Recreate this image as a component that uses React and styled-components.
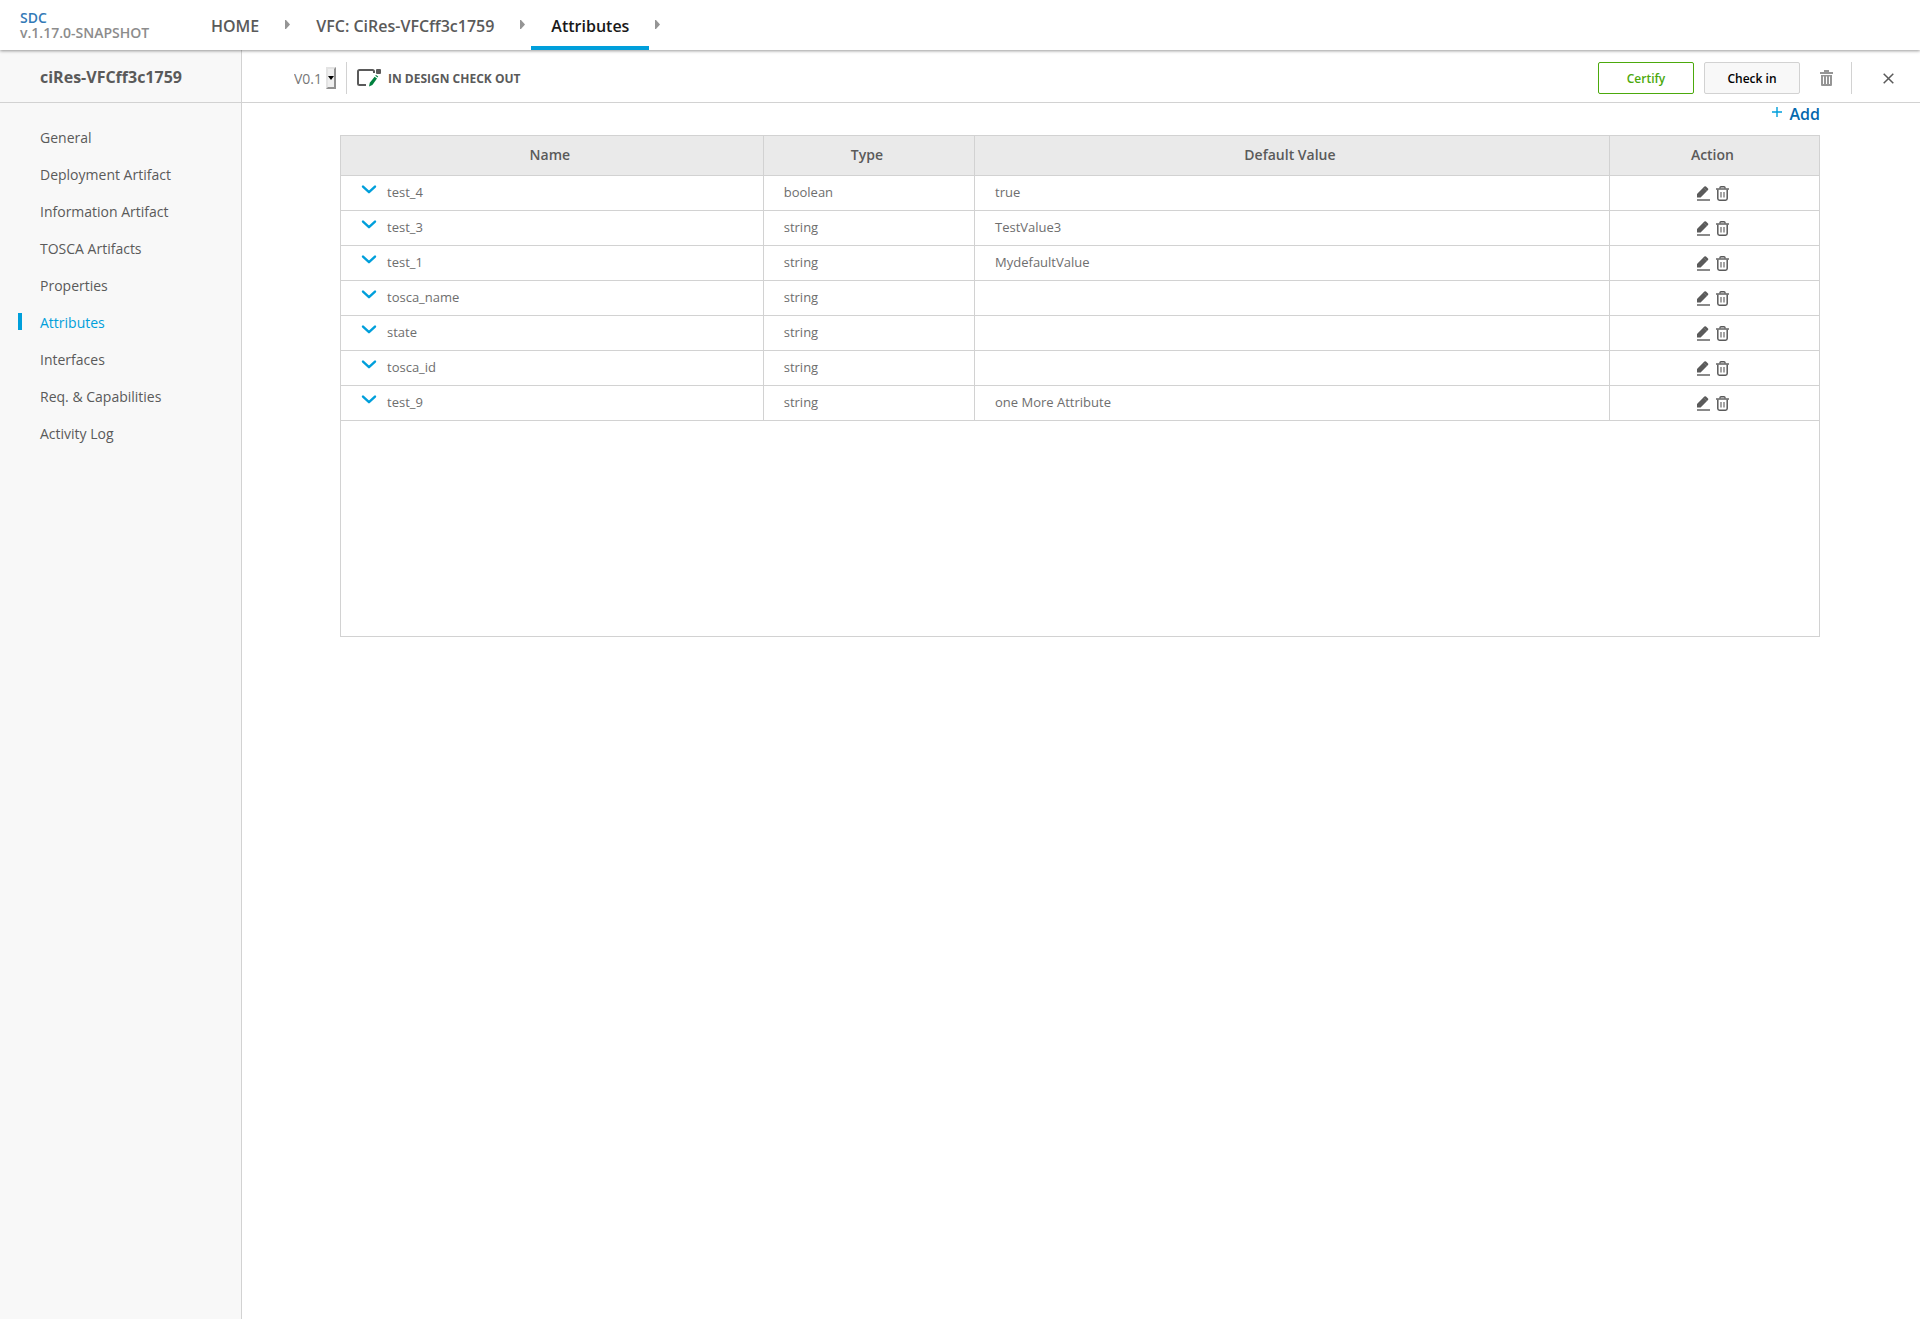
import React, { useState } from "react";
import styled, { createGlobalStyle } from "styled-components";

const GlobalStyle = createGlobalStyle`
  * {
    box-sizing: border-box;
  }

  body {
    margin: 0;
    background-color: #fff;
    color: #5a5a5a;
    font-family: "Open Sans", "Noto Sans", sans-serif;
    font-size: 14px;
  }

  button,
  select {
    font-family: inherit;
  }

  svg {
    display: block;
  }
`;

const Page = styled.div`
  display: flex;
  flex-direction: column;
  min-height: 100vh;
`;

const TopNav = styled.header`
  display: flex;
  height: 50px;
  position: relative;
  z-index: 1;
  background-color: #fff;
  box-shadow: 0 1px 3px rgba(0, 0, 0, 0.4);
`;

const Logo = styled.div`
  width: 191px;
  padding: 10px 0 0 20px;
  font-weight: 600;
  line-height: 15px;
`;

const LogoLink = styled.a`
  display: block;
  color: #337ab7;
  text-decoration: none;
`;

const Version = styled.div`
  color: #8c8c8c;
`;

const Breadcrumbs = styled.nav`
  display: flex;
  align-items: center;
  gap: 6px;
`;

const Crumb = styled.a`
  height: 50px;
  padding: 0 20px;
  border-bottom: 4px solid ${(props) => (props.$active ? "#009fdb" : "transparent")};
  color: ${(props) => (props.$active ? "#191919" : "#5a5a5a")};
  font-size: 16px;
  font-weight: 600;
  line-height: 52px;
  text-decoration: none;
`;

const CrumbArrow = styled.svg`
  width: 5px;
  height: 9px;
  margin-bottom: 2px;
  fill: #959595;
`;

const Body = styled.div`
  display: flex;
  flex: 1;
`;

const Sidebar = styled.aside`
  width: 242px;
  flex-shrink: 0;
  border-right: 1px solid #d2d2d2;
  background-color: #f8f8f8;
`;

const SidebarTitle = styled.h1`
  height: 53px;
  margin: 0;
  padding-left: 40px;
  border-bottom: 1px solid #d2d2d2;
  font-size: 16px;
  font-weight: 700;
  line-height: 54px;
`;

const Menu = styled.ul`
  margin: 0;
  padding: 16px 0 0;
  list-style: none;
`;

const MenuItem = styled.li`
  display: flex;
  align-items: center;
  gap: 18px;
  height: 37px;
  padding-left: 18px;
`;

const MenuMark = styled.span`
  width: 4px;
  height: 17px;
  margin-bottom: 2px;
  background-color: ${(props) => (props.$active ? "#009fdb" : "transparent")};
`;

const MenuLink = styled.a`
  color: ${(props) => (props.$active ? "#009fdb" : "#5a5a5a")};
  text-decoration: none;
`;

const Main = styled.main`
  flex: 1;
  min-width: 0;
`;

const Toolbar = styled.div`
  display: flex;
  align-items: center;
  height: 53px;
  padding: 4px 26px 0 52px;
  border-bottom: 1px solid #d2d2d2;
`;

const VersionPicker = styled.div`
  position: relative;
  width: 42px;
  margin-right: 10px;
`;

const VersionSelect = styled.select`
  width: 100%;
  height: 22px;
  padding: 0;
  border: none;
  appearance: none;
  background: none;
  color: #777;
  font-size: 14px;
`;

const SelectArrow = styled.span`
  display: flex;
  align-items: center;
  justify-content: center;
  position: absolute;
  top: 0;
  right: 0;
  width: 10px;
  height: 22px;
  border: 2px solid;
  border-color: #e3e3e3 #909090 #909090 #e3e3e3;
  background-color: #efefef;
  pointer-events: none;
`;

const Divider = styled.span`
  width: 1px;
  height: 32px;
  background-color: #d2d2d2;
`;

const Status = styled.div`
  display: flex;
  align-items: center;
  gap: 6px;
  margin-left: 10px;
  font-size: 12px;
  font-weight: 700;
`;

const Actions = styled.div`
  display: flex;
  align-items: center;
  margin-left: auto;
`;

const Button = styled.button`
  width: 96px;
  height: 32px;
  margin-right: 10px;
  padding: 0;
  border: 1px solid ${(props) => (props.$green ? "#4ca90c" : "#d2d2d2")};
  border-radius: 2px;
  background-color: ${(props) => (props.$green ? "#fff" : "#f8f8f8")};
  color: ${(props) => (props.$green ? "#4ca90c" : "#000")};
  font-size: 12px;
  font-weight: 600;
  cursor: pointer;
`;

const IconButton = styled.button`
  padding: 0;
  border: none;
  background: none;
  cursor: pointer;
`;

const DeleteButton = styled(IconButton)`
  margin: 0 18px 0 10px;
`;

const CloseButton = styled(IconButton)`
  margin-left: 31px;
`;

const Content = styled.section`
  padding: 0 100px 0 98px;
`;

const AddRow = styled.div`
  display: flex;
  justify-content: flex-end;
  height: 32px;
`;

const AddButton = styled.button`
  display: flex;
  align-items: flex-start;
  gap: 8px;
  height: 22px;
  padding: 0;
  border: none;
  background: none;
  color: #0568ae;
  font-size: 16px;
  font-weight: 600;
  line-height: 22px;
  cursor: pointer;

  svg {
    margin-top: 4px;
  }
`;

const TableBox = styled.div`
  min-height: 502px;
  border: 1px solid #d2d2d2;
`;

const Table = styled.table`
  width: 100%;
  border-collapse: separate;
  border-spacing: 0;
  table-layout: fixed;
`;

const HeadCell = styled.th`
  width: ${(props) => props.$width};
  height: 40px;
  padding: 0 4px 2px 0;
  border-right: 1px solid #d2d2d2;
  border-bottom: 1px solid #d2d2d2;
  background-color: #eaeaea;
  font-size: 14px;
  font-weight: 600;

  &:last-child {
    border-right: none;
  }
`;

const Cell = styled.td`
  height: 35px;
  padding: 0 20px 2px;
  border-right: 1px solid #d2d2d2;
  border-bottom: 1px solid #d2d2d2;
  color: #6e6e6e;
  font-size: 13px;
  line-height: 18px;

  &:last-child {
    border-right: none;
  }
`;

const NameCell = styled.div`
  display: flex;
  align-items: flex-start;
  gap: 10px;
`;

const RowActions = styled.div`
  display: flex;
  justify-content: center;
  gap: 6px;
  padding: 2px 3px 0 0;
`;

const menu = [
  "General",
  "Deployment Artifact",
  "Information Artifact",
  "TOSCA Artifacts",
  "Properties",
  "Attributes",
  "Interfaces",
  "Req. & Capabilities",
  "Activity Log",
];

const crumbs = ["HOME", "VFC: CiRes-VFCff3c1759", "Attributes"];

const columns = [
  { title: "Name", width: "28.6%" },
  { title: "Type", width: "14.3%" },
  { title: "Default Value", width: "42.95%" },
  { title: "Action", width: "14.15%" },
];

const attributes = [
  { name: "test_4", type: "boolean", value: "true" },
  { name: "test_3", type: "string", value: "TestValue3" },
  { name: "test_1", type: "string", value: "MydefaultValue" },
  { name: "tosca_name", type: "string", value: "" },
  { name: "state", type: "string", value: "" },
  { name: "tosca_id", type: "string", value: "" },
  { name: "test_9", type: "string", value: "one More Attribute" },
];

const CheckOutIcon = () => (
  <svg width="25" height="18" viewBox="0 0 25 18" fill="none">
    <path
      d="M17 4V2.5Q17 1 15.5 1H2.5Q1 1 1 2.5V14.5Q1 16 2.5 16H9"
      stroke="#5a5a5a"
      strokeWidth="2"
    />
    <rect x="19" y="0" width="5" height="5" rx="1" fill="#5a5a5a" />
    <path d="M12 17.5L12.8 13.8L17.6 7.7L20 9.4L15.4 16Z" fill="#00803e" />
    <path d="M18.2 6.8L19 6L21.2 7.6L20.6 8.6Z" fill="#00803e" />
  </svg>
);

const SolidTrashIcon = () => (
  <svg width="13" height="16" viewBox="0 0 13 16" fill="#959595">
    <path d="M4 0H9V2H13V4H0V2H4Z" />
    <path
      fillRule="evenodd"
      d="M1 5H12V15Q12 16 11 16H2Q1 16 1 15ZM3 6.5V14H4V6.5ZM6 6.5V14H7V6.5ZM9 6.5V14H10V6.5Z"
    />
  </svg>
);

const CloseIcon = () => (
  <svg width="11" height="11" viewBox="0 0 11 11" stroke="#5a5a5a" strokeWidth="1.5">
    <path d="M0.7 0.7L10.3 10.3M10.3 0.7L0.7 10.3" />
  </svg>
);

const PlusIcon = () => (
  <svg width="10" height="10" viewBox="0 0 10 10" stroke="#009fdb" strokeWidth="1.4">
    <path d="M5 0V10M0 5H10" />
  </svg>
);

const ChevronIcon = () => (
  <svg width="16" height="12" viewBox="0 0 16 12" fill="none">
    <path
      d="M2 3.6L8 9.2L14 3.6"
      stroke="#009fdb"
      strokeWidth="2.4"
      strokeLinecap="round"
      strokeLinejoin="round"
    />
  </svg>
);

const PencilIcon = () => (
  <svg width="13" height="15" viewBox="0 0 13 15" fill="#5a5a5a">
    <path d="M0 11.5V8L7.4 0.6Q8.2 -0.2 9 0.6L11 2.6Q11.6 3.2 11 4L3.6 11.5Z" />
    <path d="M6.8 1.9L9.7 4.8" stroke="#8a8a8a" strokeWidth="0.6" />
    <rect x="0" y="13" width="13" height="2" fill="#8a8a8a" />
  </svg>
);

const TrashIcon = () => (
  <svg width="13" height="15" viewBox="0 0 13 15" fill="none" stroke="#5a5a5a">
    <path d="M0 3H13" strokeWidth="1.4" />
    <path d="M4 2.6V1.6Q4 0.7 5 0.7H8Q9 0.7 9 1.6V2.6" strokeWidth="1.4" />
    <path d="M1.8 3.5V12.5Q1.8 14.2 3.5 14.2H9.5Q11.2 14.2 11.2 12.5V3.5" strokeWidth="1.5" />
    <path d="M5 6V11.5M8 6V11.5" strokeWidth="1.1" />
  </svg>
);

const App = () => {
  const [activeItem, setActiveItem] = useState("Attributes");
  const [rows, setRows] = useState(attributes);

  const handleDelete = (name) => {
    setRows(rows.filter((row) => row.name !== name));
  };

  return (
    <Page>
      <GlobalStyle />
      <TopNav>
        <Logo>
          <LogoLink href="#">SDC</LogoLink>
          <Version>v.1.17.0-SNAPSHOT</Version>
        </Logo>
        <Breadcrumbs>
          {crumbs.map((crumb, index) => (
            <React.Fragment key={crumb}>
              <Crumb href="#" $active={index === crumbs.length - 1}>
                {crumb}
              </Crumb>
              <CrumbArrow viewBox="0 0 5 9">
                <path d="M0 0H1L5 4.5L1 9H0Z" />
              </CrumbArrow>
            </React.Fragment>
          ))}
        </Breadcrumbs>
      </TopNav>

      <Body>
        <Sidebar>
          <SidebarTitle>ciRes-VFCff3c1759</SidebarTitle>
          <Menu>
            {menu.map((item) => (
              <MenuItem key={item}>
                <MenuMark $active={item === activeItem} />
                <MenuLink
                  href="#"
                  $active={item === activeItem}
                  onClick={() => setActiveItem(item)}
                >
                  {item}
                </MenuLink>
              </MenuItem>
            ))}
          </Menu>
        </Sidebar>

        <Main>
          <Toolbar>
            <VersionPicker>
              <VersionSelect aria-label="Version">
                <option>V0.1</option>
              </VersionSelect>
              <SelectArrow>
                <svg width="6" height="4" viewBox="0 0 6 4">
                  <path d="M0 0H6L3 4Z" />
                </svg>
              </SelectArrow>
            </VersionPicker>
            <Divider />
            <Status>
              <CheckOutIcon />
              IN DESIGN CHECK OUT
            </Status>
            <Actions>
              <Button $green>Certify</Button>
              <Button>Check in</Button>
              <DeleteButton aria-label="Delete">
                <SolidTrashIcon />
              </DeleteButton>
              <Divider />
              <CloseButton aria-label="Close">
                <CloseIcon />
              </CloseButton>
            </Actions>
          </Toolbar>

          <Content>
            <AddRow>
              <AddButton>
                <PlusIcon />
                Add
              </AddButton>
            </AddRow>
            <TableBox>
              <Table>
                <thead>
                  <tr>
                    {columns.map((column) => (
                      <HeadCell key={column.title} $width={column.width}>
                        {column.title}
                      </HeadCell>
                    ))}
                  </tr>
                </thead>
                <tbody>
                  {rows.map((row) => (
                    <tr key={row.name}>
                      <Cell>
                        <NameCell>
                          <IconButton aria-label="Expand">
                            <ChevronIcon />
                          </IconButton>
                          {row.name}
                        </NameCell>
                      </Cell>
                      <Cell>{row.type}</Cell>
                      <Cell>{row.value}</Cell>
                      <Cell>
                        <RowActions>
                          <IconButton aria-label="Edit">
                            <PencilIcon />
                          </IconButton>
                          <IconButton
                            aria-label="Delete"
                            onClick={() => handleDelete(row.name)}
                          >
                            <TrashIcon />
                          </IconButton>
                        </RowActions>
                      </Cell>
                    </tr>
                  ))}
                </tbody>
              </Table>
            </TableBox>
          </Content>
        </Main>
      </Body>
    </Page>
  );
};

export default App;
